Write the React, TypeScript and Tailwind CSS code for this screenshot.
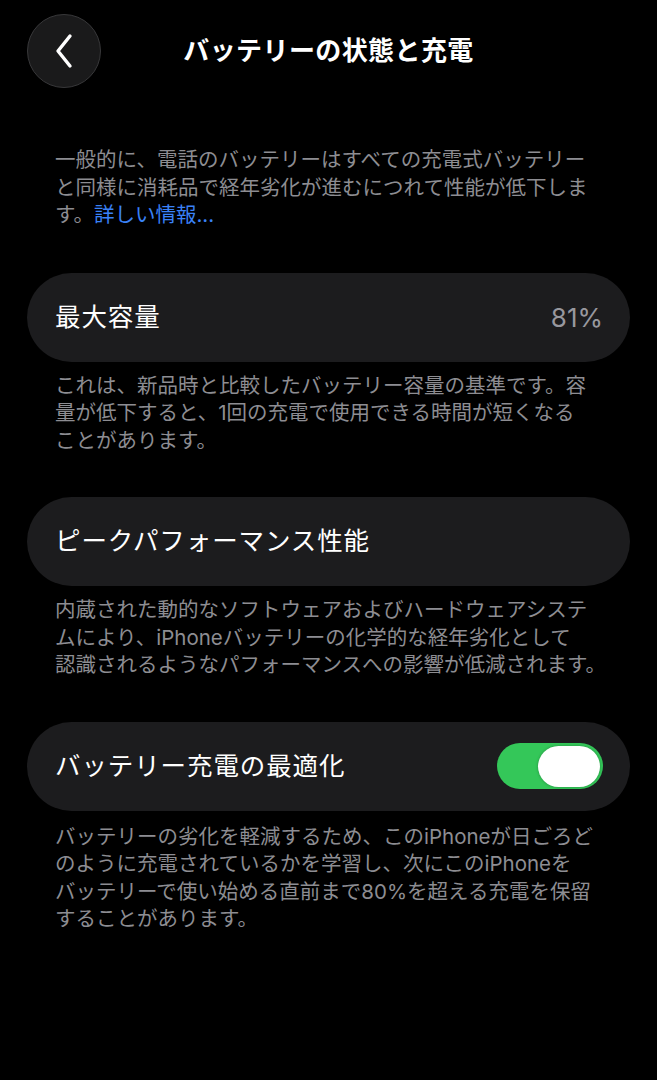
import React from 'react';

const font = "font-['Inter','Noto_Sans_CJK_JP',sans-serif]";

const Note: React.FC<{ lines: React.ReactNode[]; className?: string }> = ({ lines, className = '' }) => (
  <p className={`px-[55px] text-[20.5px] leading-[27.5px] text-[#8d8d92] ${className}`}>
    {lines.map((l, i) => (
      <span key={i} className="block whitespace-nowrap">
        {l}
      </span>
    ))}
  </p>
);

const Row: React.FC<{ label: string; children?: React.ReactNode }> = ({ label, children }) => (
  <div className="mx-[27px] h-[89px] rounded-full bg-[#1c1c1e] pl-[28px] pr-[27px] flex items-center justify-between">
    <span className="text-[25.5px] text-white tracking-[0.9px]">{label}</span>
    {children}
  </div>
);

const Toggle: React.FC = () => (
  <div className="w-[106px] h-[46px] rounded-full bg-[#34c759] flex items-center justify-end pr-[3px]">
    <div className="w-[62px] h-[41px] rounded-full bg-white shadow-[0_0_3px_rgba(0,0,0,0.3)]" />
  </div>
);

const App: React.FC = () => {
  return (
    <div className={`min-h-screen w-[657px] bg-black ${font} antialiased`}>
      <header className="relative h-[102px] flex items-center justify-center">
        <button className="absolute left-[27px] top-[14px] w-[74px] h-[74px] rounded-full bg-[#1a1a1b] border border-[#38383a] flex items-center justify-center">
          <svg width="22" height="36" viewBox="0 0 22 36" fill="none">
            <path d="M17 3 L5 18 L17 33" stroke="white" strokeWidth="3.4" strokeLinecap="round" strokeLinejoin="round" />
          </svg>
        </button>
        <h1 className="text-[26px] font-bold text-white tracking-[0.4px] -mt-[2px]">バッテリーの状態と充電</h1>
      </header>

      <Note
        className="mt-[44px]"
        lines={[
          '一般的に、電話のバッテリーはすべての充電式バッテリー',
          'と同様に消耗品で経年劣化が進むにつれて性能が低下しま',
          <>
            す。<span className="text-[#3a82f7]">詳しい情報...</span>
          </>,
        ]}
      />

      <div className="mt-[44px]">
        <Row label="最大容量">
          <span className="text-[26px] text-[#98989e]">81%</span>
        </Row>
      </div>
      <Note
        className="mt-[10px]"
        lines={[
          'これは、新品時と比較したバッテリー容量の基準です。容',
          '量が低下すると、1回の充電で使用できる時間が短くなる',
          'ことがあります。',
        ]}
      />

      <div className="mt-[43px]">
        <Row label="ピークパフォーマンス性能" />
      </div>
      <Note
        className="mt-[10px]"
        lines={[
          '内蔵された動的なソフトウェアおよびハードウェアシステ',
          'ムにより、iPhoneバッテリーの化学的な経年劣化として',
          '認識されるようなパフォーマンスへの影響が低減されます。',
        ]}
      />

      <div className="mt-[43px]">
        <Row label="バッテリー充電の最適化">
          <Toggle />
        </Row>
      </div>
      <Note
        className="mt-[12px]"
        lines={[
          'バッテリーの劣化を軽減するため、このiPhoneが日ごろど',
          'のように充電されているかを学習し、次にこのiPhoneを',
          'バッテリーで使い始める直前まで80%を超える充電を保留',
          'することがあります。',
        ]}
      />
    </div>
  );
};

export default App;
